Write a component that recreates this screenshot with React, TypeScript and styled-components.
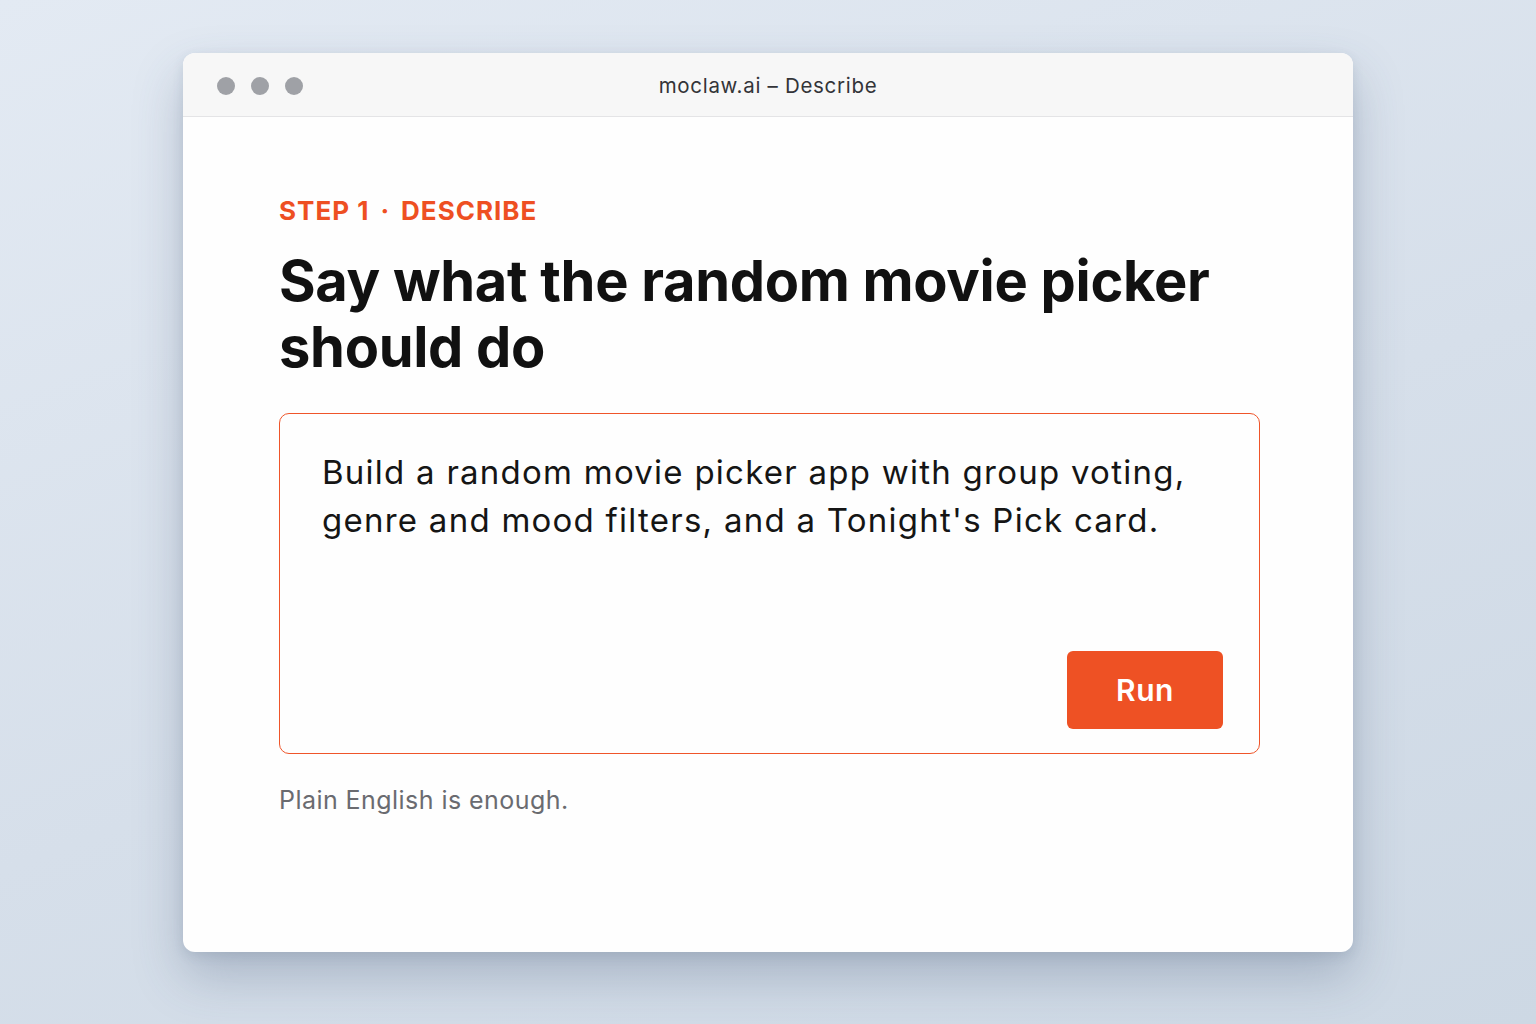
import React from "react";
import styled, { createGlobalStyle } from "styled-components";

const Global = createGlobalStyle`
  html, body { margin: 0; padding: 0; }
  body {
    font-family: Inter, "Noto Sans", "Liberation Sans", sans-serif;
    background: linear-gradient(160deg, #e3eaf3 0%, #d6dfea 55%, #cdd8e4 100%);
    min-height: 100vh;
  }
  * { box-sizing: border-box; }
`;

const Stage = styled.div`
  width: 1536px;
  height: 1024px;
  padding-top: 53px;
  display: flex;
  justify-content: center;
  align-items: flex-start;
`;

const Window = styled.div`
  width: 1170px;
  height: 899px;
  background: #fefefe;
  border-radius: 12px;
  overflow: hidden;
  box-shadow: 0 24px 50px rgba(60, 80, 110, 0.28), 0 4px 12px rgba(60, 80, 110, 0.12);
  display: flex;
  flex-direction: column;
`;

const TitleBar = styled.div`
  height: 64px;
  flex: none;
  background: #f7f7f7;
  border-bottom: 1px solid #e4e4e6;
  display: grid;
  grid-template-columns: 1fr auto 1fr;
  align-items: center;
  padding: 2px 34px 0;
`;

const Dots = styled.div`
  display: flex;
  gap: 16px;
`;

const Dot = styled.span`
  width: 18px;
  height: 18px;
  border-radius: 50%;
  background: #9fa1a6;
`;

const Title = styled.div`
  font-size: 20.5px;
  color: #333438;
  letter-spacing: 0.7px;
`;

const Content = styled.div`
  padding: 78px 93px 0 96px;
  display: flex;
  flex-direction: column;
`;

const StepLabel = styled.div`
  font-size: 26px;
  line-height: 32px;
  font-weight: 700;
  color: #ee4f22;
  letter-spacing: 1px;
`;

const Sep = styled.span`
  margin: 0 11px 0 11px;
`;

const Heading = styled.h1`
  margin: 21px 0 0;
  font-size: 56px;
  line-height: 66px;
  font-weight: 700;
  color: #111111;
  letter-spacing: -0.3px;
`;

const PromptBox = styled.div`
  margin-top: 33px;
  width: 981px;
  height: 341px;
  border: 1.5px solid #ef552a;
  border-radius: 10px;
  padding: 34px 36px 24px 42px;
  display: flex;
  flex-direction: column;
  justify-content: space-between;
`;

const PromptText = styled.div`
  font-size: 33px;
  line-height: 48px;
  color: #151515;
  letter-spacing: 1.25px;
  white-space: nowrap;
`;

const RunRow = styled.div`
  display: flex;
  justify-content: flex-end;
`;

const RunButton = styled.button`
  width: 156px;
  height: 78px;
  border: none;
  border-radius: 6px;
  background: #ee5124;
  color: #ffffff;
  font-family: inherit;
  font-size: 30px;
  font-weight: 600;
  letter-spacing: 0.5px;
  cursor: pointer;
`;

const Note = styled.div`
  margin-top: 30px;
  font-size: 25px;
  line-height: 32px;
  color: #6a6b70;
  letter-spacing: 0.45px;
`;

export default function App() {
  return (
    <>
      <Global />
      <Stage>
        <Window>
          <TitleBar>
            <Dots>
              <Dot />
              <Dot />
              <Dot />
            </Dots>
            <Title>moclaw.ai – Describe</Title>
            <span />
          </TitleBar>
          <Content>
            <StepLabel>
              STEP 1<Sep>·</Sep>DESCRIBE
            </StepLabel>
            <Heading>
              Say what the random movie picker
              <br />
              should do
            </Heading>
            <PromptBox>
              <PromptText>
                Build a random movie picker app with group voting,
                <br />
                genre and mood filters, and a Tonight's Pick card.
              </PromptText>
              <RunRow>
                <RunButton>Run</RunButton>
              </RunRow>
            </PromptBox>
            <Note>Plain English is enough.</Note>
          </Content>
        </Window>
      </Stage>
    </>
  );
}
